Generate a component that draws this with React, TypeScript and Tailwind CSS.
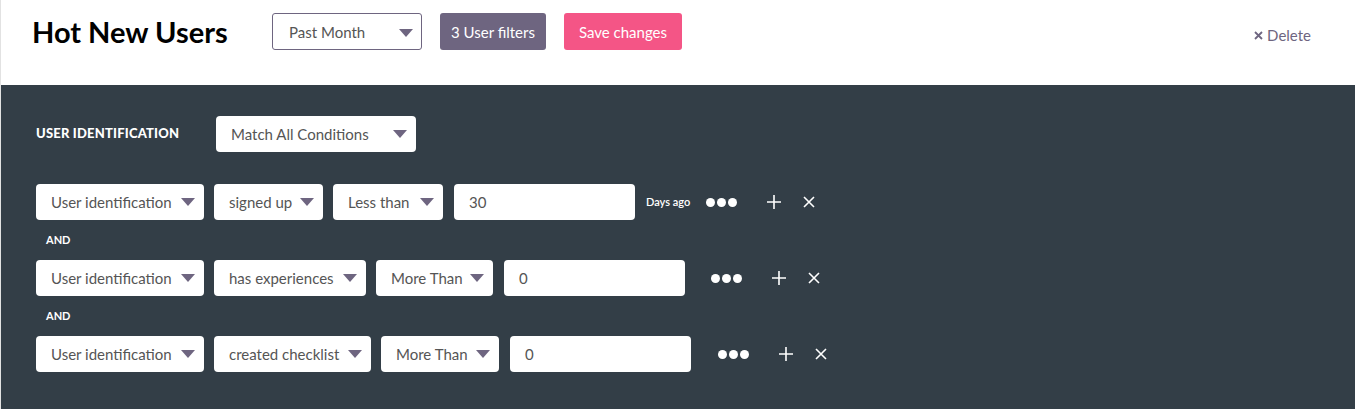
import React from "react";

const font = { fontFamily: "Lato, 'Noto Sans', sans-serif" };

function Caret() {
  return (
    <svg width="14" height="8" viewBox="0 0 14 8" className="shrink-0">
      <path d="M0 0 H14 L7 8 Z" fill="#6e6580" />
    </svg>
  );
}

function Select({ label, w }: { label: string; w: string }) {
  return (
    <div className={`flex h-9 items-center justify-between rounded bg-white pl-[15px] pr-[9px] text-[15px] text-[#555] ${w}`}>
      <span>{label}</span>
      <Caret />
    </div>
  );
}

function Dots() {
  return (
    <div className="flex items-center gap-[2px]">
      <span className="h-[9px] w-[9px] rounded-full bg-white" />
      <span className="h-[9px] w-[9px] rounded-full bg-white" />
      <span className="h-[9px] w-[9px] rounded-full bg-white" />
    </div>
  );
}

function Plus() {
  return (
    <svg width="16" height="16" viewBox="0 0 16 16">
      <path d="M8 1 V15 M1 8 H15" stroke="white" strokeWidth="1.6" />
    </svg>
  );
}

function Cross() {
  return (
    <svg width="12" height="12" viewBox="0 0 12 12">
      <path d="M1 1 L11 11 M11 1 L1 11" stroke="white" strokeWidth="1.6" />
    </svg>
  );
}

function Row({
  verb,
  verbW,
  cmp,
  cmpW,
  value,
  days,
  dotsMl,
}: {
  verb: string;
  verbW: string;
  cmp: string;
  cmpW: string;
  value: string;
  days?: boolean;
  dotsMl: string;
}) {
  return (
    <div className="flex h-9 items-center">
      <Select label="User identification" w="w-[168px]" />
      <div className="ml-[10px]"><Select label={verb} w={verbW} /></div>
      <div className="ml-[10px]"><Select label={cmp} w={cmpW} /></div>
      <div className="ml-[11px] flex h-9 w-[181px] items-center rounded bg-white pl-[15px] text-[15px] text-[#555]">
        {value}
      </div>
      {days && <span className="ml-[11px] text-[11px] font-semibold text-white">Days ago</span>}
      <div className={dotsMl}><Dots /></div>
      <div className="ml-[29px]"><Plus /></div>
      <div className="ml-[21px]"><Cross /></div>
    </div>
  );
}

function And() {
  return <div className="flex h-10 items-center pl-[10px] pt-[1px] text-[11px] font-bold text-white">AND</div>;
}

export default function App() {
  return (
    <div style={font} className="h-[409px] w-full overflow-hidden border-l border-[#e2e2e2]">
      <div className="flex h-[85px] items-start bg-white">
        <h1 className="ml-[31px] mt-[14px] w-[240px] text-[29px] font-bold leading-9 text-black">Hot New Users</h1>
        <div className="mt-[13px] flex h-[37px] w-[150px] items-center justify-between rounded-[3px] border border-[#6e6580] pl-4 pr-[8px] pt-[2px] text-[15px] text-[#555]">
          <span>Past Month</span>
          <Caret />
        </div>
        <div className="ml-[18px] mt-[13px] flex h-[37px] w-[106px] items-center justify-center rounded-[3px] bg-[#6e6580] pt-[2px] text-[15px] text-white">
          3 User filters
        </div>
        <div className="ml-[18px] mt-[13px] flex h-[37px] w-[118px] items-center justify-center rounded-[3px] bg-[#f45586] pt-[2px] text-[15px] text-white">
          Save changes
        </div>
        <div className="ml-auto mr-[44px] mt-[24px] flex items-center gap-1 text-[15px] text-[#6e6580]">
          <svg width="9" height="9" viewBox="0 0 9 9">
            <path d="M1 1 L8 8 M8 1 L1 8" stroke="#6e6580" strokeWidth="1.8" />
          </svg>
          <span>Delete</span>
        </div>
      </div>
      <div className="h-[324px] bg-[#333e47] pl-[35px] pt-[31px]">
        <div className="flex h-9 items-center">
          <span className="w-[180px] text-[13px] font-black tracking-[0.2px] text-white">USER IDENTIFICATION</span>
          <Select label="Match All Conditions" w="w-[200px]" />
        </div>
        <div className="mt-8">
          <Row verb="signed up" verbW="w-[109px]" cmp="Less than" cmpW="w-[110px]" value="30" days dotsMl="ml-[16px]" />
          <And />
          <Row verb="has experiences" verbW="w-[152px]" cmp="More Than" cmpW="w-[117px]" value="0" dotsMl="ml-[26px]" />
          <And />
          <Row verb="created checklist" verbW="w-[157px]" cmp="More Than" cmpW="w-[118px]" value="0" dotsMl="ml-[27px]" />
        </div>
      </div>
    </div>
  );
}
